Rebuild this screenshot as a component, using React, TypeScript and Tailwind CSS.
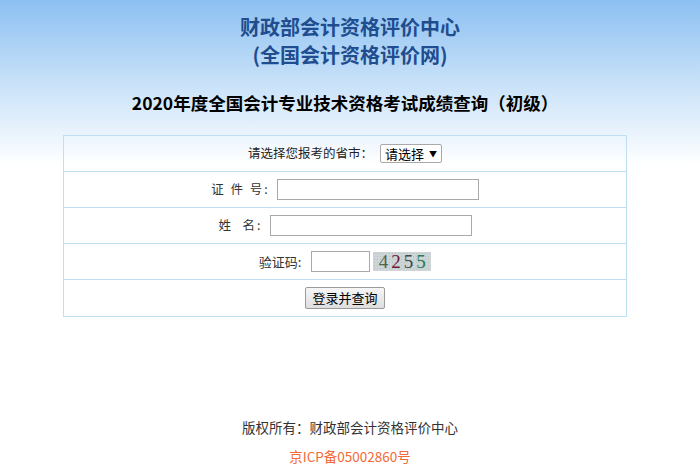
import React from "react";

const font = { fontFamily: '"Microsoft YaHei", "Noto Sans CJK SC", "Noto Sans", sans-serif' };

function Row({ children, last }: { children: React.ReactNode; last?: boolean }) {
  return (
    <div className={"h-[36px] flex items-center justify-center gap-[7px] " + (last ? "" : "border-b border-[#bfe0f2]")}>
      {children}
    </div>
  );
}

export default function App() {
  return (
    <div
      className="min-h-[475px] bg-[linear-gradient(to_bottom,#8cc0f2_0px,#c6e0f8_80px,#ffffff_165px)] text-[#333] pt-[13px]"
      style={font}
    >
      <div className="text-center text-[#1f4d8f] font-bold text-[20px] leading-[28px]">
        <div>财政部会计资格评价中心</div>
        <div>(全国会计资格评价网)</div>
      </div>
      <h1 className="mt-[22px] text-center font-bold text-[17.5px] leading-[24px] text-black pr-[10px]">
        2020年度全国会计专业技术资格考试成绩查询（初级）
      </h1>
      <div className="mt-[20px] ml-[63px] w-[564px] border border-[#bfe0f2] text-[12.5px]">
        <Row>
          <span className="text-[#222]">请选择您报考的省市：</span>
          <div className="h-[19px] w-[62px] border border-[#a9a9a9] rounded-[2px] bg-white flex items-center justify-between px-[4px] text-[13px] text-black">
            <span>请选择</span>
            <span className="text-[8px]">▼</span>
          </div>
        </Row>
        <Row>
          <span className="tracking-[2px]">证 件 号:</span>
          <div className="h-[21px] w-[202px] border border-[#a9a9a9] bg-white" />
        </Row>
        <Row>
          <span className="tracking-[2px]">姓&nbsp;&nbsp;名:</span>
          <div className="h-[21px] w-[202px] border border-[#a9a9a9] bg-white" />
        </Row>
        <Row>
          <span className="text-[13px] mr-[3px]">验证码:</span>
          <div className="flex items-center gap-[3px]">
            <div className="h-[21px] w-[59px] border border-[#a9a9a9] bg-white" />
            <div
              className="h-[19px] w-[58px] bg-[#cdd5d7] bg-[radial-gradient(#b7c2c4_1px,transparent_1px)] bg-[length:3px_3px] flex items-center justify-center gap-[3px] text-[19px] leading-none"
              style={{ fontFamily: '"Liberation Serif", serif' }}
            >
              <span className="text-[#4e6650]">4</span>
              <span className="text-[#6a1a3a]">2</span>
              <span className="text-[#3e4a44]">5</span>
              <span className="text-[#2e7a4e]">5</span>
            </div>
          </div>
        </Row>
        <Row last>
          <button className="h-[22px] w-[80px] border border-[#9a9a9a] rounded-[2px] bg-[linear-gradient(to_bottom,#f6f6f6,#dedede)] text-[13px] text-black">
            登录并查询
          </button>
        </Row>
      </div>
      <div className="mt-[100px] text-center text-[13.5px] leading-[20px] text-[#333]">
        版权所有：财政部会计资格评价中心
      </div>
      <div className="mt-[9px] text-center text-[13.5px] leading-[20px] text-[#f26a35]">京ICP备05002860号</div>
    </div>
  );
}
